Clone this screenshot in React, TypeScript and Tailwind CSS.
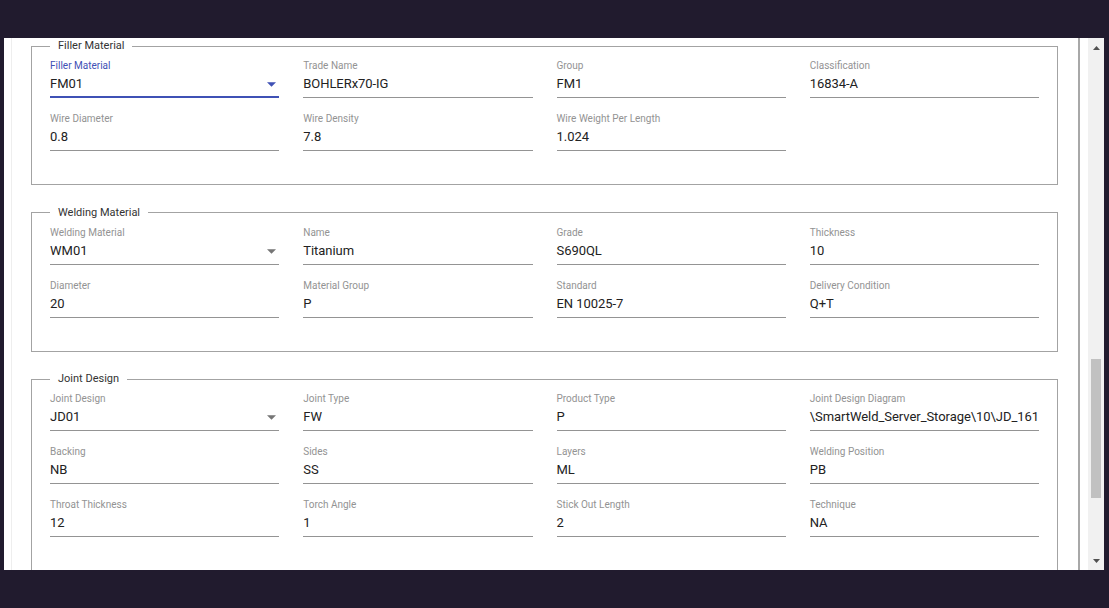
type Field = {
  label: string;
  value: string;
  select?: boolean;
  focused?: boolean;
};

type Section = {
  title: string;
  fields: (Field | null)[];
};

// ── data ──────────────────────────────────────────────────────────────────────

const sections: Section[] = [
  {
    title: "Filler Material",
    fields: [
      { label: "Filler Material", value: "FM01", select: true, focused: true },
      { label: "Trade Name", value: "BOHLERx70-IG" },
      { label: "Group", value: "FM1" },
      { label: "Classification", value: "16834-A" },
      { label: "Wire Diameter", value: "0.8" },
      { label: "Wire Density", value: "7.8" },
      { label: "Wire Weight Per Length", value: "1.024" },
      null,
    ],
  },
  {
    title: "Welding Material",
    fields: [
      { label: "Welding Material", value: "WM01", select: true },
      { label: "Name", value: "Titanium" },
      { label: "Grade", value: "S690QL" },
      { label: "Thickness", value: "10" },
      { label: "Diameter", value: "20" },
      { label: "Material Group", value: "P" },
      { label: "Standard", value: "EN 10025-7" },
      { label: "Delivery Condition", value: "Q+T" },
    ],
  },
  {
    title: "Joint Design",
    fields: [
      { label: "Joint Design", value: "JD01", select: true },
      { label: "Joint Type", value: "FW" },
      { label: "Product Type", value: "P" },
      { label: "Joint Design Diagram", value: "\\SmartWeld_Server_Storage\\10\\JD_161" },
      { label: "Backing", value: "NB" },
      { label: "Sides", value: "SS" },
      { label: "Layers", value: "ML" },
      { label: "Welding Position", value: "PB" },
      { label: "Throat Thickness", value: "12" },
      { label: "Torch Angle", value: "1" },
      { label: "Stick Out Length", value: "2" },
      { label: "Technique", value: "NA" },
    ],
  },
];

// ── pieces ────────────────────────────────────────────────────────────────────

function TextField({ field }: { field: Field }) {
  return (
    <div className="flex flex-col h-[38px]">
      <span
        className={
          "text-[10px] leading-[12px] whitespace-nowrap " +
          (field.focused ? "text-[#3f51b5]" : "text-[#939393]")
        }
      >
        {field.label}
      </span>
      <div
        className={
          "relative mt-[2px] flex-1 " +
          (field.focused
            ? "border-b-2 border-[#3f51b5]"
            : "border-b border-[#949494]")
        }
      >
        <div
          className={
            "h-[20px] leading-[20px] text-[13px] text-[#222222] whitespace-nowrap " +
            (field.select ? "pr-[20px] overflow-hidden" : "tracking-[-0.05px]")
          }
        >
          {field.value}
        </div>
        {field.select && (
          <svg
            width="9"
            height="5"
            viewBox="0 0 10 5"
            className="absolute right-[3px] top-[8px]"
          >
            <path
              d="M0 0l5 5 5-5z"
              fill={field.focused ? "#3f51b5" : "#757575"}
            />
          </svg>
        )}
      </div>
    </div>
  );
}

function SectionBox({ section }: { section: Section }) {
  return (
    <fieldset className="border border-[#a3a3a3] px-[18px] pt-[6px] pb-[33px] mb-[19.5px] min-w-0">
      <legend className="px-[8px] text-[11px] leading-[16px] text-[#333333]">
        {section.title}
      </legend>
      <div className="grid grid-cols-4 gap-x-[24px] gap-y-[15px]">
        {section.fields.map((f, i) =>
          f ? <TextField key={i} field={f} /> : <div key={i} />
        )}
      </div>
    </fieldset>
  );
}

function Scrollbar() {
  return (
    <div className="w-[16px] h-full bg-[#f1f1f1] flex flex-col items-center shrink-0">
      <div className="h-[17px] flex items-center justify-center pt-[2px]">
        <svg width="7" height="4" viewBox="0 0 7 4">
          <path d="M0 4l3.5-4 3.5 4z" fill="#505050" />
        </svg>
      </div>
      <div className="h-[304px]" />
      <div className="w-[10px] h-[139px] bg-[#c1c1c1]" />
      <div className="flex-1" />
      <div className="h-[17px] flex items-center justify-center pb-[2px]">
        <svg width="7" height="4" viewBox="0 0 7 4">
          <path d="M0 0l3.5 4 3.5-4z" fill="#505050" />
        </svg>
      </div>
    </div>
  );
}

// ── page ──────────────────────────────────────────────────────────────────────

export default function App() {
  return (
    <div
      className="w-[1109px] h-[608px] bg-[#211b2e] pt-[38px] pl-[4px] overflow-hidden"
      style={{ fontFamily: "Roboto, 'Liberation Sans', sans-serif" }}
    >
      <div className="w-[1100px] h-[532px] bg-white flex overflow-hidden">
        <div className="ml-[7px] border-l border-[#eeeeee] pl-[19px] flex-1 flex h-full overflow-hidden">
          <div className="w-[1027px] shrink-0 h-full overflow-hidden">
            {sections.map((s) => (
              <SectionBox key={s.title} section={s} />
            ))}
          </div>
          <div className="w-[20px] shrink-0" />
          <div className="w-[2px] h-full bg-[#a8a8a8] shrink-0" />
          <div className="w-[8px] shrink-0" />
        </div>
        <Scrollbar />
      </div>
    </div>
  );
}
